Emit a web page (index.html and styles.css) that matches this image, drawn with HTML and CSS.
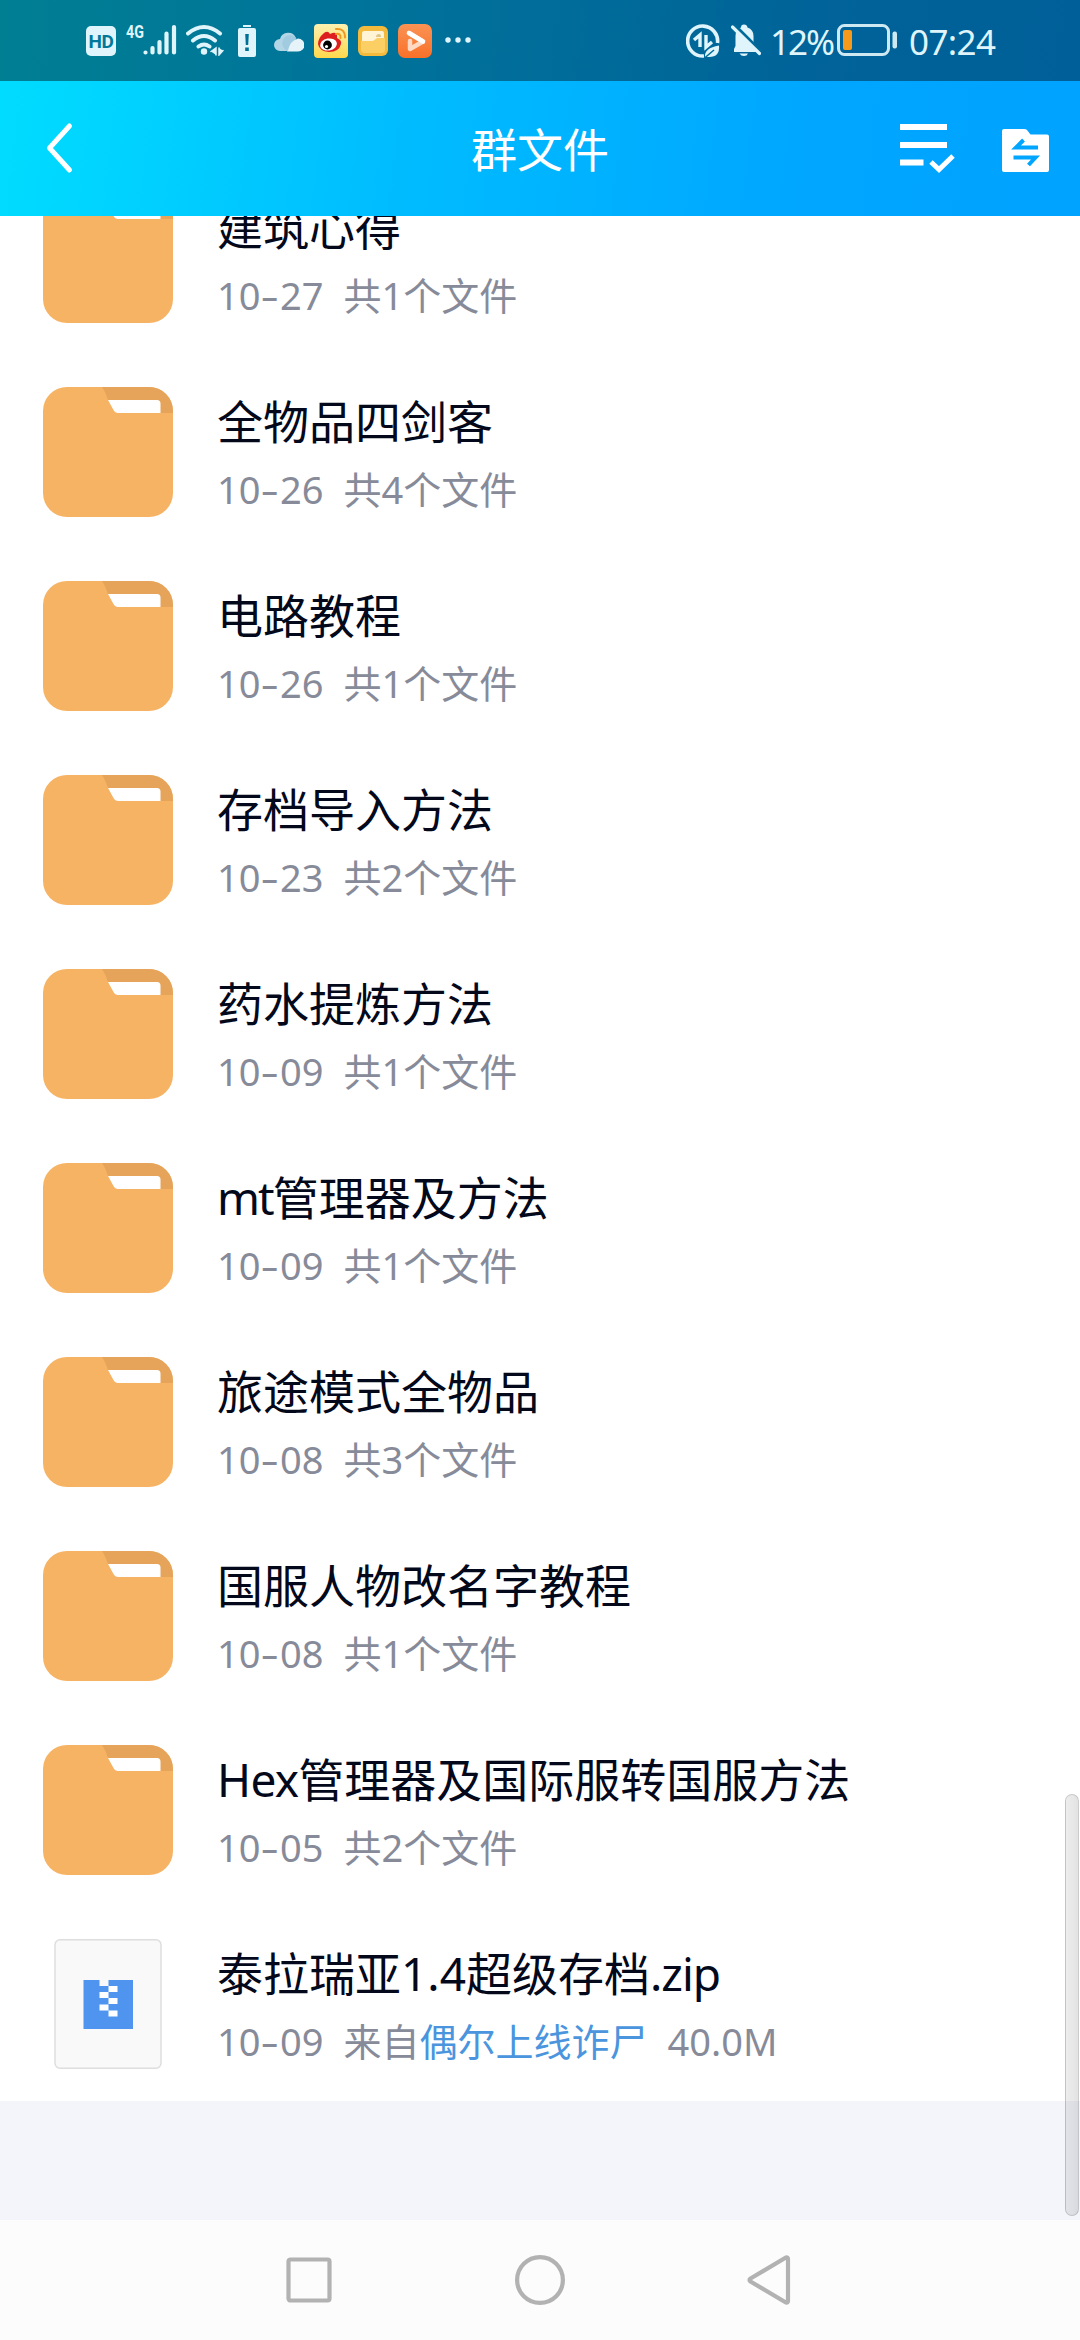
FILE: index.html
```html
<!DOCTYPE html>
<html lang="zh-CN">
<head>
<meta charset="utf-8">
<title>群文件</title>
<link rel="stylesheet" href="styles.css">
</head>
<body>
<svg class="defs" width="0" height="0" aria-hidden="true">
  <symbol id="folder" viewBox="0 0 130 130">
    <rect width="130" height="130" rx="24" fill="#f6b364"/>
    <path d="M59 0H106A24 24 0 0 1 130 24V26H73L65 13Q62 4 59 0Z" fill="#e6a45b"/>
    <path d="M65 13H114Q117.500 13 117.500 16.500V26H75Q72 26 70.500 23Z" fill="#fff"/>
  </symbol>
</svg>
<div class="screen">
  <div class="status">
    <span class="hd">HD</span>
    <span class="net">4G</span>
    <svg class="signal" width="34" height="32" viewBox="0 0 34 32" stroke="#dff5fb" stroke-width="4.200" stroke-linecap="round"><path d="M2.500 28.500v0M9.500 24v4.500M16.500 18v10.500M23.500 9.500v19M31 3v25.500"/></svg>
    <svg class="wifi" width="38" height="32" viewBox="0 0 38 32" fill="none" stroke="#dff5fb" stroke-width="4" stroke-linecap="round"><path d="M2 9.500Q18 -3.500 34 9.500M7 16.500Q18 7.500 29 16.500M12.500 22.500Q18 18.500 23.500 22.500"/><circle cx="18" cy="27.500" r="3.200" fill="#dff5fb" stroke="none"/><path d="M25 27.500L30 24V31M37 26.500L33 31V24" stroke-width="1.500" fill="#dff5fb"/></svg>
    <svg class="alert" width="18" height="32" viewBox="0 0 18 32"><path d="M5 0h8v2H5zM2 3h14q2 0 2 2v25q0 2-2 2H2q-2 0-2-2V5q0-2 2-2Z" fill="#dff5fb"/><path d="M7.200 9h3.600l-.6 11H7.800zM7.200 22.500h3.600v3.500H7.200z" fill="#006f97"/></svg>
    <svg class="cloud" width="30" height="21" viewBox="0 0 30 21"><path d="M6 20a6 6 0 0 1 0-12A8.500 8.500 0 0 1 22 7L20 20Z" fill="#b3d6e6"/><path d="M13 20.500Q17 9 24 7.500a6.500 6.500 0 0 1 0 13Z" fill="#e6f4fa"/><path d="M14 20a8 8 0 1 1 9-12Q16 9 14 20" fill="#94c3dc" opacity=".6"/></svg>
    <svg class="weibo" width="34" height="34" viewBox="0 0 34 34"><defs><linearGradient id="wb" x2="0" y2="1"><stop stop-color="#fdf0b0"/><stop offset="1" stop-color="#ffd84c"/></linearGradient></defs><rect width="34" height="34" rx="4" fill="url(#wb)"/><path d="M4 20Q4 14 10 9Q14 6 16 10Q22 7 23 11L23 14Q28 16 27 20Q25 28 15 28Q5 27 4 20Z" fill="#de1f20"/><ellipse cx="14.500" cy="20.500" rx="8.500" ry="6" fill="#fff" transform="rotate(-10 14.500 20.500)"/><circle cx="13.500" cy="21" r="4.400" fill="#000"/><circle cx="12.500" cy="22.500" r="1.600" fill="#fff"/><path d="M22 10Q27 9 26.500 14M22 5Q31 4 31 13.500" fill="none" stroke="#ee9a22" stroke-width="2" stroke-linecap="round"/></svg>
    <svg class="files" width="30" height="30" viewBox="0 0 30 30"><rect width="30" height="30" rx="6" fill="#f4ba3d"/><path d="M6 5H24Q26 5 26 8V16H4V8Q4 5 6 5Z" fill="#fff5d6"/><path d="M3 15H15L19 12H27V24Q27 27 24 27H6Q3 27 3 24Z" fill="#fbcf63"/><path d="M18 11Q18 8 21 8Q23 8 23 11Z" fill="#e0c489"/></svg>
    <svg class="play" width="34" height="34" viewBox="0 0 34 34"><defs><linearGradient id="pl" x2="0" y2="1"><stop stop-color="#fa9354"/><stop offset="1" stop-color="#f87029"/></linearGradient></defs><rect width="34" height="34" rx="7" fill="url(#pl)"/><path d="M11 9L25 17.500L12 25V17" fill="none" stroke="#ffd9c3" stroke-width="4.500" stroke-linejoin="round" stroke-linecap="round"/><path d="M11 9L25 17.500" stroke="#fff" stroke-width="4.500" stroke-linecap="round"/></svg>
    <svg class="more" width="26" height="6" viewBox="0 0 26 6" fill="#dff5fb"><circle cx="3" cy="3" r="2.700"/><circle cx="13" cy="3" r="2.700"/><circle cx="23" cy="3" r="2.700"/></svg>
    <svg class="data" width="34" height="34" viewBox="0 0 34 34" fill="none" stroke="#dff5fb"><path d="M31.500 19A15 15 0 1 0 18 32" stroke-width="3.600"/><path d="M8 16L14 11V23M26 18L20 23V11" stroke-width="3.400"/><path d="M19 33Q18 24 33 21.500Q34 33 23 33Z" fill="#dff5fb" stroke="none"/><path d="M18.500 34L28 26" stroke="#006c9a" stroke-width="1.500"/></svg>
    <svg class="bell" width="30" height="32" viewBox="0 0 30 32"><path d="M5 28V25L6.500 22V12Q6.500 5.500 12 3.500Q12 .5 15 .5Q18 .5 18.500 3.500Q24.500 5.500 24.500 12V22L27 25V28ZM10.500 29.500H19Q18 32 15 32Q12 32 10.500 29.500Z" fill="#dff5fb" transform="translate(-2)"/><path d="M3 1L31 29" stroke="#006a99" stroke-width="4"/><path d="M1.500 3L28.500 29.500" stroke="#dff5fb" stroke-width="3.200" stroke-linecap="round"/></svg>
    <span class="pct">12%</span>
    <svg class="batt" width="60" height="32" viewBox="0 0 60 32"><rect x="1.500" y="1.500" width="50" height="29" rx="6" fill="none" stroke="#cfe9f3" stroke-width="3"/><rect x="6" y="6" width="9" height="20" rx="2" fill="#f79a1c"/><rect x="55.500" y="7.500" width="4.500" height="17" rx="2" fill="#cfe9f3"/></svg>
    <span class="clock">07:24</span>
  </div>
  <header class="bar">
    <svg class="back" width="30" height="52" viewBox="0 0 30 52" fill="none" stroke="#fff" stroke-width="5" stroke-linecap="round" stroke-linejoin="round"><path d="M24.500 4L4.500 26L24.500 48"/></svg>
    <h1>群文件</h1>
    <div class="tools">
      <svg width="56" height="50" viewBox="0 0 56 50"><path d="M0 0H47V6H0zM0 18H47V24H0zM0 35.500H23.500V41.500H0z" fill="#fff"/><path d="M31 38L39 45.500L53 32" fill="none" stroke="#fff" stroke-width="5"/></svg>
      <svg width="47" height="43" viewBox="0 0 47 43"><path d="M2 0H22Q24 0 25 1L28.500 5.500H45Q47 5.500 47 7.500V41Q47 43 45 43H2Q0 43 0 41V2Q0 0 2 0Z" fill="#fff"/><path d="M36 18.500H14L21.500 11M11.500 28.500H33.500L26.500 36" fill="none" stroke="#00a5ff" stroke-width="4"/></svg>
    </div>
  </header>
  <main class="list">
    <div class="rows">
      <div class="row"><svg class="ico"><use href="#folder"/></svg><div class="info"><div class="name">建筑心得</div><div class="meta"><span>10<i>-</i>27</span><span>共1个文件</span></div></div></div>
      <div class="row"><svg class="ico"><use href="#folder"/></svg><div class="info"><div class="name">全物品四剑客</div><div class="meta"><span>10<i>-</i>26</span><span>共4个文件</span></div></div></div>
      <div class="row"><svg class="ico"><use href="#folder"/></svg><div class="info"><div class="name">电路教程</div><div class="meta"><span>10<i>-</i>26</span><span>共1个文件</span></div></div></div>
      <div class="row"><svg class="ico"><use href="#folder"/></svg><div class="info"><div class="name">存档导入方法</div><div class="meta"><span>10<i>-</i>23</span><span>共2个文件</span></div></div></div>
      <div class="row"><svg class="ico"><use href="#folder"/></svg><div class="info"><div class="name">药水提炼方法</div><div class="meta"><span>10<i>-</i>09</span><span>共1个文件</span></div></div></div>
      <div class="row"><svg class="ico"><use href="#folder"/></svg><div class="info"><div class="name"><span class="tight">mt</span>管理器及方法</div><div class="meta"><span>10<i>-</i>09</span><span>共1个文件</span></div></div></div>
      <div class="row"><svg class="ico"><use href="#folder"/></svg><div class="info"><div class="name">旅途模式全物品</div><div class="meta"><span>10<i>-</i>08</span><span>共3个文件</span></div></div></div>
      <div class="row"><svg class="ico"><use href="#folder"/></svg><div class="info"><div class="name">国服人物改名字教程</div><div class="meta"><span>10<i>-</i>08</span><span>共1个文件</span></div></div></div>
      <div class="row"><svg class="ico"><use href="#folder"/></svg><div class="info"><div class="name"><span class="snug">Hex</span>管理器及国际服转国服方法</div><div class="meta"><span>10<i>-</i>05</span><span>共2个文件</span></div></div></div>
      <div class="row"><svg class="ico" viewBox="0 0 130 130"><rect x="12" y=".75" width="106" height="128.500" rx="5" fill="#f9f9f9" stroke="#dedede" stroke-width="1.500"/><path d="M40.500 41H56.500V47H65.500V41H90V90H40.500Z" fill="#4f94ee"/><path d="M65.500 47h9v6h-9zM56.500 53h9v6h-9zM65.500 59h9v6h-9zM56.500 65.500h9v6h-9zM65.500 71.500h9v6h-9z" fill="#fff"/></svg><div class="info"><div class="name">泰拉瑞亚1.4超级存档<span class="ext">.zip</span></div><div class="meta"><span>10<i>-</i>09</span><span>来自<b>偶尔上线诈尸</b></span><span>40.0M</span></div></div></div>
    </div>
    <div class="thumb"></div>
  </main>
  <nav class="keys">
    <svg width="50" height="50" viewBox="0 0 50 50"><rect x="4.500" y="4.500" width="41" height="41" rx="2"/></svg>
    <svg width="50" height="50" viewBox="0 0 50 50"><circle cx="25" cy="25" r="22.900"/></svg>
    <svg width="50" height="50" viewBox="0 0 50 50"><path d="M4.500 23.500L40 2.500Q42 2 42 4V46Q42 48 40 47.500L4.500 26.500Q2.500 25 4.500 23.500Z"/></svg>
  </nav>
</div>
</body>
</html>
```

FILE: styles.css
```css
body {
  margin: 0;
  background: #fff;
  font-family: "Noto Sans", "Noto Sans CJK SC", sans-serif;
}
svg { display: block; flex: none; }
.defs { position: absolute; }
.screen {
  width: 1080px;
  height: 2340px;
  display: flex;
  flex-direction: column;
  overflow: hidden;
}
.status {
  height: 81px;
  flex: none;
  display: flex;
  align-items: flex-start;
  box-sizing: border-box;
  padding: 24px 0 0 86px;
  background: linear-gradient(97deg, #007f93 0%, #00749a 32%, #006399 75%, #005f98 100%);
  color: #dff5fb;
}
.hd {
  width: 30px;
  height: 30px;
  margin-top: 2px;
  border-radius: 5px;
  background: #dff5fb;
  color: #00789a;
  font: bold 19px/31px "Roboto", sans-serif;
  text-align: center;
  letter-spacing: -.5px;
}
.net {
  width: 17px;
  margin-left: 10px;
  font: bold 19px/16px "Roboto", sans-serif;
  transform: scaleX(.75);
  transform-origin: left;
}
.signal { margin-left: 0; }
.wifi { margin-left: 9px; }
.alert { margin: 1px 0 0 14px; }
.cloud { margin: 7px 0 0 18px; }
.weibo { margin-left: 10px; }
.files { margin: 2px 0 0 10px; }
.play { margin-left: 10px; }
.more { margin: 13px 0 0 13px; }
.data { margin-left: 215px; }
.bell { margin: 0 0 0 11px; }
.pct, .clock {
  font-size: 35px;
  line-height: 35px;
  white-space: nowrap;
}
.pct { width: 61px; margin-left: 9px; letter-spacing: -2px; }
.batt { margin: 0 0 0 6px; }
.clock { margin-left: 12px; letter-spacing: -.6px; }
.bar {
  height: 135px;
  flex: none;
  display: grid;
  grid-template-columns: 1fr auto 1fr;
  align-items: center;
  background: linear-gradient(97deg, #00dcff 0%, #00d6ff 8%, #00bdff 36%, #00a6ff 75%, #00a3ff 100%);
}
.back { margin: 0 0 1px 45px; }
.bar h1 {
  margin: 0;
  color: #fff;
  font-size: 46px;
  line-height: 60px;
  font-weight: 400;
}
.tools {
  display: flex;
  justify-content: flex-end;
  gap: 46px;
  padding-right: 31px;
}
.tools svg + svg { margin-top: 5px; }
.list {
  position: relative;
  height: 2004px;
  flex: none;
  display: flex;
  flex-direction: column;
  background: #f4f5fa;
  overflow: hidden;
}
.rows { margin-top: -55px; background: #fff; }
.row {
  height: 194px;
  display: flex;
  align-items: center;
  gap: 44px;
  padding-left: 43px;
}
.ico { width: 130px; height: 130px; }
.info { padding-top: 3px; }
.name {
  height: 66px;
  line-height: 66px;
  font-size: 46px;
  color: #03081a;
  white-space: nowrap;
}
.tight { letter-spacing: -2px; }
.snug { letter-spacing: -.7px; }
.ext { letter-spacing: -1px; }
.meta {
  display: flex;
  gap: 20px;
  height: 66px;
  line-height: 70px;
  font-size: 38px;
  color: #878b99;
  white-space: nowrap;
}
.meta i {
  display: inline-block;
  width: 19.500px;
  text-align: center;
  font-style: normal;
  transform: scaleX(1.500);
}
.meta b { font-weight: 400; color: #4a95dd; }
.thumb {
  position: absolute;
  top: 1578px;
  right: 1px;
  width: 14px;
  height: 422px;
  box-sizing: border-box;
  border: 1px solid rgba(0, 0, 20, .14);
  border-radius: 7px;
  background: linear-gradient(90deg, rgba(0, 0, 10, .07), rgba(0, 0, 10, .11));
}
.keys {
  height: 120px;
  flex: none;
  display: flex;
  justify-content: center;
  align-items: center;
  gap: 181px;
  background: #fcfcfc;
}
.keys svg { fill: none; stroke: #b2b2b2; stroke-width: 4.200; }
```
